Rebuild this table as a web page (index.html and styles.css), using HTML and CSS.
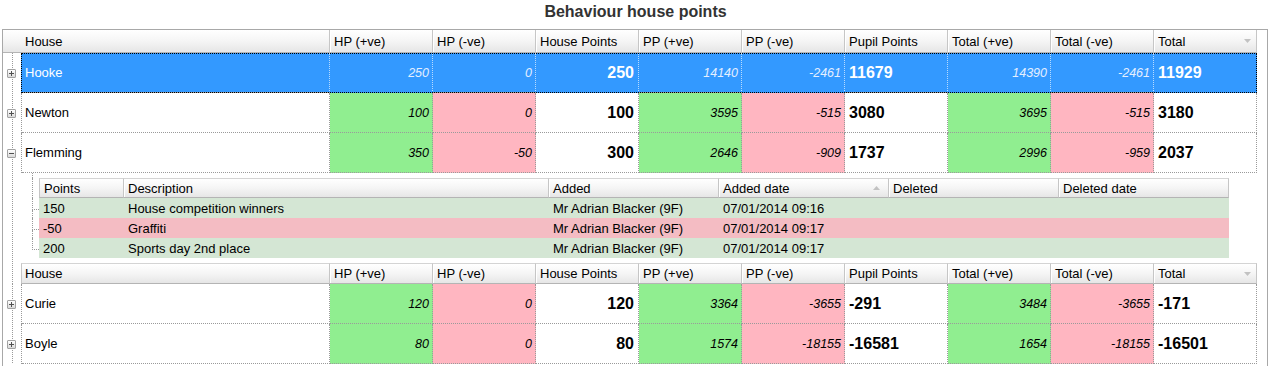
FILE: index.html
```html
<!DOCTYPE html>
<html>
<head>
<meta charset="utf-8">
<title>Behaviour house points</title>
<link rel="stylesheet" href="styles.css">
</head>
<body>
<div class="title">Behaviour house points</div>
<div class="grid">
  <div class="hdr">
    <div class="hdr-cells">
      <div class="h first">House</div>
      <div class="h">HP (+ve)</div>
      <div class="h">HP (-ve)</div>
      <div class="h">House Points</div>
      <div class="h">PP (+ve)</div>
      <div class="h">PP (-ve)</div>
      <div class="h">Pupil Points</div>
      <div class="h">Total (+ve)</div>
      <div class="h">Total (-ve)</div>
      <div class="h">Total<svg class="arrow" width="7" height="4" viewBox="0 0 7 4"><path d="M0 0h7L3.5 4z" fill="#c2c2c2"/></svg></div>
    </div>
  </div>

  <div class="row sel">
    <div class="exp"><span class="box"><svg width="7" height="7" viewBox="0 0 7 7"><path d="M1 3.5h5M3.5 1v5" stroke="#505050"/></svg></span></div>
    <div class="cells">
      <div class="c name">Hooke</div>
      <div class="c num">250</div>
      <div class="c num">0</div>
      <div class="c big r">250</div>
      <div class="c num">14140</div>
      <div class="c num">-2461</div>
      <div class="c big l">11679</div>
      <div class="c num">14390</div>
      <div class="c num">-2461</div>
      <div class="c big l">11929</div>
    </div>
  </div>

  <div class="row">
    <div class="exp"><span class="box"><svg width="7" height="7" viewBox="0 0 7 7"><path d="M1 3.5h5M3.5 1v5" stroke="#505050"/></svg></span></div>
    <div class="cells">
      <div class="c name">Newton</div>
      <div class="c num g">100</div>
      <div class="c num p">0</div>
      <div class="c big r">100</div>
      <div class="c num g">3595</div>
      <div class="c num p">-515</div>
      <div class="c big l">3080</div>
      <div class="c num g">3695</div>
      <div class="c num p">-515</div>
      <div class="c big l">3180</div>
    </div>
  </div>

  <div class="row">
    <div class="exp"><span class="box"><svg width="7" height="7" viewBox="0 0 7 7"><path d="M1 3.5h5" stroke="#505050"/></svg></span></div>
    <div class="cells">
      <div class="c name">Flemming</div>
      <div class="c num g">350</div>
      <div class="c num p">-50</div>
      <div class="c big r">300</div>
      <div class="c num g">2646</div>
      <div class="c num p">-909</div>
      <div class="c big l">1737</div>
      <div class="c num g">2996</div>
      <div class="c num p">-959</div>
      <div class="c big l">2037</div>
    </div>
  </div>

  <div class="detail">
    <div class="exp"></div>
    <div class="dbody">
      <div class="dgap"><div class="tree"><div class="dn"></div></div></div>
      <div class="drow">
        <div class="tree"><div class="dn"></div></div>
        <div class="dcells">
          <div class="dh first">Points</div>
          <div class="dh">Description</div>
          <div class="dh">Added</div>
          <div class="dh sort">Added date<svg class="arrow" width="7" height="4" viewBox="0 0 7 4"><path d="M0 4h7L3.5 0z" fill="#c2c2c2"/></svg></div>
          <div class="dh">Deleted</div>
          <div class="dh">Deleted date</div>
        </div>
      </div>
      <div class="drow">
        <div class="tree tee"><div class="up"></div><div class="dn"></div></div>
        <div class="dcells dg">
          <div class="dc">150</div>
          <div class="dc">House competition winners</div>
          <div class="dc">Mr Adrian Blacker (9F)</div>
          <div class="dc">07/01/2014 09:16</div>
          <div class="dc"></div>
          <div class="dc"></div>
        </div>
      </div>
      <div class="drow">
        <div class="tree tee"><div class="up"></div><div class="dn"></div></div>
        <div class="dcells dp">
          <div class="dc">-50</div>
          <div class="dc">Graffiti</div>
          <div class="dc">Mr Adrian Blacker (9F)</div>
          <div class="dc">07/01/2014 09:17</div>
          <div class="dc"></div>
          <div class="dc"></div>
        </div>
      </div>
      <div class="drow">
        <div class="tree tee end"><div class="up"></div><div class="dn"></div></div>
        <div class="dcells dg">
          <div class="dc">200</div>
          <div class="dc">Sports day 2nd place</div>
          <div class="dc">Mr Adrian Blacker (9F)</div>
          <div class="dc">07/01/2014 09:17</div>
          <div class="dc"></div>
          <div class="dc"></div>
        </div>
      </div>
      <div class="dgap"></div>
    </div>
  </div>

  <div class="hdr sub">
    <div class="exp"></div>
    <div class="hdr-cells">
      <div class="h first">House</div>
      <div class="h">HP (+ve)</div>
      <div class="h">HP (-ve)</div>
      <div class="h">House Points</div>
      <div class="h">PP (+ve)</div>
      <div class="h">PP (-ve)</div>
      <div class="h">Pupil Points</div>
      <div class="h">Total (+ve)</div>
      <div class="h">Total (-ve)</div>
      <div class="h">Total<svg class="arrow" width="7" height="4" viewBox="0 0 7 4"><path d="M0 0h7L3.5 4z" fill="#c2c2c2"/></svg></div>
    </div>
  </div>

  <div class="row">
    <div class="exp"><span class="box"><svg width="7" height="7" viewBox="0 0 7 7"><path d="M1 3.5h5M3.5 1v5" stroke="#505050"/></svg></span></div>
    <div class="cells">
      <div class="c name">Curie</div>
      <div class="c num g">120</div>
      <div class="c num p">0</div>
      <div class="c big r">120</div>
      <div class="c num g">3364</div>
      <div class="c num p">-3655</div>
      <div class="c big l">-291</div>
      <div class="c num g">3484</div>
      <div class="c num p">-3655</div>
      <div class="c big l">-171</div>
    </div>
  </div>

  <div class="row">
    <div class="exp"><span class="box"><svg width="7" height="7" viewBox="0 0 7 7"><path d="M1 3.5h5M3.5 1v5" stroke="#505050"/></svg></span></div>
    <div class="cells">
      <div class="c name">Boyle</div>
      <div class="c num g">80</div>
      <div class="c num p">0</div>
      <div class="c big r">80</div>
      <div class="c num g">1574</div>
      <div class="c num p">-18155</div>
      <div class="c big l">-16581</div>
      <div class="c num g">1654</div>
      <div class="c num p">-18155</div>
      <div class="c big l">-16501</div>
    </div>
  </div>
</div>
</body>
</html>
```

FILE: styles.css
```css
html, body {
  margin: 0;
  padding: 0;
  overflow: hidden;
  background: #fff;
}
body {
  font-family: "Liberation Sans", Arial, sans-serif;
  font-size: 13px;
  color: #000;
}
.title {
  height: 29px;
  line-height: 24px;
  text-align: center;
  font-weight: bold;
  font-size: 16px;
  color: #333;
}
.grid {
  margin-left: 2px;
  width: 1266px;
  height: 337px;
  overflow: hidden;
  box-sizing: border-box;
  border: 1px solid #a8a8a8;
  border-bottom: none;
}

/* column headers */
.hdr {
  display: flex;
  height: 23px;
}
.hdr.sub {
  height: 21px;
}
.hdr-cells {
  display: grid;
  grid-template-columns: 327px repeat(9, 103px);
}
.sub .hdr-cells {
  grid-template-columns: 309px repeat(9, 103px);
}
.h, .dh {
  box-sizing: border-box;
  display: flex;
  align-items: center;
  justify-content: space-between;
  padding: 0 5px 0 4px;
  white-space: nowrap;
  background: linear-gradient(#ffffff, #f5f5f5 50%, #e6e6e6);
  border-right: 1px solid #c6c6c6;
  border-bottom: 1px solid #b4b4b4;
  box-shadow: inset 1px 0 0 #fff;
}
.h.first {
  padding-left: 22px;
  box-shadow: none;
}
.sub .h {
  border-top: 1px solid #d4d4d4;
}
.sub .h.first {
  padding-left: 3px;
  border-left: 1px solid #c6c6c6;
}
.dh.sort {
  padding-right: 8px;
}

/* expander column */
.exp {
  width: 18px;
  flex: none;
  display: flex;
  align-items: center;
  background-image: linear-gradient(#9a9a9a 50%, transparent 50%);
  background-size: 1px 2px;
  background-repeat: repeat-y;
  background-position: 9px 0;
}
.box {
  margin-left: 4px;
  width: 9px;
  height: 9px;
  box-sizing: border-box;
  border: 1px solid #a2a2a2;
  border-radius: 1px;
  background: linear-gradient(#ffffff, #d9d9d9);
  display: flex;
}

/* data rows */
.row {
  display: flex;
  height: 40px;
}
.cells {
  display: grid;
  grid-template-columns: 308px repeat(9, 103px);
  border-left: 1px dotted #9a9a9a;
}
.c {
  box-sizing: border-box;
  display: flex;
  align-items: center;
  min-width: 0;
  border-right: 1px dotted #9a9a9a;
  border-bottom: 1px dotted #9a9a9a;
  white-space: nowrap;
}
.name {
  padding-left: 3px;
}
.num {
  justify-content: flex-end;
  padding-right: 3px;
  font-style: italic;
  font-size: 12.5px;
}
.big {
  font-weight: bold;
  font-size: 16px;
}
.big.r {
  justify-content: flex-end;
  padding-right: 4px;
}
.big.l {
  padding-left: 4px;
}
.g { background: #90ee90; }
.p { background: #ffb6c1; }

.sel .cells {
  background: #3399ff;
  color: #fff;
  outline: 1px dotted #000;
  outline-offset: -1px;
}
.sel .c {
  border-right-color: rgba(255, 255, 255, 0.65);
}
.sel .num {
  color: #e4efff;
}

/* detail grid */
.detail {
  display: flex;
}
.dbody {
  display: flex;
  flex-direction: column;
}
.dgap {
  height: 5px;
  display: flex;
}
.drow {
  display: flex;
  height: 20px;
}
.tree {
  width: 18px;
  flex: none;
  display: flex;
  flex-direction: column;
}
.tree .up {
  box-sizing: border-box;
  height: 12px;
  margin-left: 11px;
  border-left: 1px dotted #9a9a9a;
  border-bottom: 1px dotted #9a9a9a;
}
.tree .dn {
  flex: 1;
  margin-left: 11px;
  border-left: 1px dotted #9a9a9a;
}
.tree.end .dn {
  border-left-color: transparent;
}
.dcells {
  display: grid;
  grid-template-columns: 85px 425px repeat(4, 170px);
}
.dh {
  border-top: 1px solid #d4d4d4;
}
.dh.first {
  border-left: 1px solid #c6c6c6;
  box-shadow: none;
}
.dc {
  display: flex;
  align-items: center;
  padding-left: 4px;
  white-space: nowrap;
}
.dg { background: #d4e6d4; }
.dp { background: #f4bcc3; }
```
